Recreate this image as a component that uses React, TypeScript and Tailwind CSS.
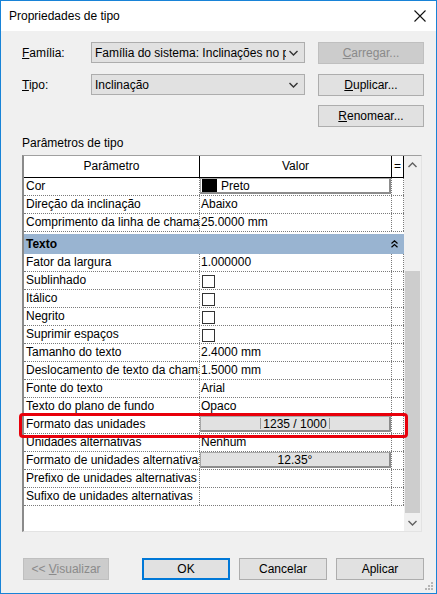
import React from 'react';

const font = "font-['Segoe_UI','Liberation_Sans',Arial,sans-serif]";

function Chevron({ up = false, className = '' }: { up?: boolean; className?: string }) {
  return (
    <svg width="9" height="6" viewBox="0 0 9 6" className={className}>
      <path d={up ? 'M0.5 5 L4.5 1 L8.5 5' : 'M0.5 1 L4.5 5 L8.5 1'} fill="none" stroke="currentColor" strokeWidth="1.4" />
    </svg>
  );
}

function CheckBox() {
  return <div className="ml-[2px] mt-[3px] h-[13px] w-[13px] border border-[#333333] bg-white" />;
}

function ValueButton({ children, split = false }: { children: React.ReactNode; split?: boolean }) {
  return (
    <div className="flex h-[16px] w-full items-center justify-center border border-[#a8a8a8] border-r-2 border-b-2 border-r-[#8c8c8c] border-b-[#8c8c8c] bg-[#e1e1e1] leading-[14px]">
      {split ? (
        <div className="flex items-center">
          <span className="h-[11px] w-px bg-[#9a9a9a]" />
          <span className="px-[2px]">{children}</span>
          <span className="h-[11px] w-px bg-[#9a9a9a]" />
        </div>
      ) : (
        children
      )}
    </div>
  );
}

function ColorButton() {
  return (
    <div className="flex h-[16px] w-full items-center border border-[#a8a8a8] border-r-2 border-b-2 border-r-[#8c8c8c] border-b-[#8c8c8c] bg-white">
      <span className="ml-[1px] h-[13px] w-[15px] bg-black" />
      <span className="ml-[4px] leading-[14px]">Preto</span>
    </div>
  );
}

function Row({ name, children }: { name: string; children?: React.ReactNode }) {
  return (
    <div className="flex h-[18px] border-b border-dotted border-[#7a7a7a]">
      <div className="w-[176px] shrink-0 overflow-hidden whitespace-nowrap border-r border-dotted border-[#7a7a7a] pl-[2px] leading-[17px]">
        {name}
      </div>
      <div className="w-[192px] shrink-0 overflow-hidden whitespace-nowrap border-r border-dotted border-[#7a7a7a] leading-[17px]">
        {children}
      </div>
      <div className="w-[12px] shrink-0 border-r border-dotted border-[#7a7a7a]" />
    </div>
  );
}

function TextValue({ children }: { children: React.ReactNode }) {
  return <span className="pl-[1px]">{children}</span>;
}

function DialogButton({ children, disabled = false, primary = false }: { children: React.ReactNode; disabled?: boolean; primary?: boolean }) {
  return (
    <div
      className={`flex h-[22px] w-[88px] items-center justify-center ${
        disabled
          ? 'border border-[#bfbfbf] bg-[#cccccc] text-[#8a8a8a]'
          : primary
          ? 'border-2 border-[#0078d7] bg-[#e1e1e1]'
          : 'border border-[#adadad] bg-[#e1e1e1]'
      }`}
    >
      {children}
    </div>
  );
}

export default function App() {
  return (
    <div className={`relative flex h-[594px] w-[437px] flex-col border border-[#1883d7] bg-[#f0f0f0] text-[12px] text-black ${font}`}>
      {/* Title bar */}
      <div className="flex h-[30px] shrink-0 items-center justify-between bg-white pl-[8px] pr-[10px]">
        <span className="leading-[16px]">Propriedades de tipo</span>
        <svg width="12" height="12" viewBox="0 0 12 12">
          <path d="M0.5 0.5 L11.5 11.5 M11.5 0.5 L0.5 11.5" stroke="#111" strokeWidth="1.1" />
        </svg>
      </div>

      <div className="flex flex-1 flex-col pl-[21px] pr-[12px]">
        {/* Família */}
        <div className="mt-[11px] flex h-[22px] items-center">
          <span className="w-[69px]">
            <u>F</u>amília:
          </span>
          <div className="flex h-[21px] w-[214px] items-center self-start border border-[#adadad] bg-[#e1e1e1] pl-[3px]">
            <span className="w-[191px] overflow-hidden whitespace-nowrap">Família do sistema: Inclinações no ponto</span>
            <Chevron className="ml-[3px] text-[#333]" />
          </div>
          <div className="ml-auto flex h-[22px] w-[106px] items-center justify-center border border-[#bfbfbf] bg-[#cccccc] text-[#8a8a8a]">
            <span>
              <u>C</u>arregar...
            </span>
          </div>
        </div>

        {/* Tipo */}
        <div className="mt-[10px] flex h-[22px] items-center">
          <span className="w-[69px]">
            <u>T</u>ipo:
          </span>
          <div className="flex h-[21px] w-[214px] items-center self-start border border-[#adadad] bg-[#e1e1e1] pl-[3px]">
            <span className="w-[191px] overflow-hidden whitespace-nowrap">Inclinação</span>
            <Chevron className="ml-[3px] text-[#333]" />
          </div>
          <div className="ml-auto flex h-[22px] w-[106px] items-center justify-center border border-[#adadad] bg-[#e1e1e1]">
            <span>
              <u>D</u>uplicar...
            </span>
          </div>
        </div>

        {/* Renomear */}
        <div className="mt-[9px] flex h-[22px] justify-end">
          <div className="flex h-[22px] w-[106px] items-center justify-center border border-[#adadad] bg-[#e1e1e1]">
            <span>
              <u>R</u>enomear...
            </span>
          </div>
        </div>

        <div className="mt-[8px] leading-[16px]">Parâmetros de tipo</div>

        {/* Property grid */}
        <div className="mt-[4px] flex h-[377px] w-[400px] border-t border-l-2 border-r border-b border-t-[#a0a0a0] border-l-[#8a8a8a] border-r-[#e3e3e3] border-b-[#e3e3e3] bg-white">
          <div className="flex w-[380px] flex-col">
            <div className="flex h-[22px] shrink-0 border-b border-black">
              <div className="w-[176px] border-r border-black text-center leading-[21px]">Parâmetro</div>
              <div className="w-[192px] border-r border-black text-center leading-[21px]">Valor</div>
              <div className="w-[12px] border-r border-black text-center leading-[20px]">=</div>
            </div>

            <Row name="Cor">
              <ColorButton />
            </Row>
            <Row name="Direção da inclinação">
              <TextValue>Abaixo</TextValue>
            </Row>
            <Row name="Comprimento da linha de chamada">
              <TextValue>25.0000 mm</TextValue>
            </Row>

            <div className="mt-[2px] flex h-[20px] shrink-0 items-center justify-between bg-[#99b4d1] pl-[2px] pr-[6px]">
              <span className="font-bold">Texto</span>
              <svg width="7" height="8" viewBox="0 0 7 8">
                <path d="M0.5 3.5 L3.5 0.8 L6.5 3.5 M0.5 7.2 L3.5 4.5 L6.5 7.2" fill="none" stroke="#000" strokeWidth="1.2" />
              </svg>
            </div>

            <Row name="Fator da largura">
              <TextValue>1.000000</TextValue>
            </Row>
            <Row name="Sublinhado">
              <CheckBox />
            </Row>
            <Row name="Itálico">
              <CheckBox />
            </Row>
            <Row name="Negrito">
              <CheckBox />
            </Row>
            <Row name="Suprimir espaços">
              <CheckBox />
            </Row>
            <Row name="Tamanho do texto">
              <TextValue>2.4000 mm</TextValue>
            </Row>
            <Row name="Deslocamento de texto da chamada">
              <TextValue>1.5000 mm</TextValue>
            </Row>
            <Row name="Fonte do texto">
              <TextValue>Arial</TextValue>
            </Row>
            <Row name="Texto do plano de fundo">
              <TextValue>Opaco</TextValue>
            </Row>
            <Row name="Formato das unidades">
              <ValueButton split>1235 / 1000</ValueButton>
            </Row>
            <Row name="Unidades alternativas">
              <TextValue>Nenhum</TextValue>
            </Row>
            <Row name="Formato de unidades alternativas">
              <ValueButton>12.35°</ValueButton>
            </Row>
            <Row name="Prefixo de unidades alternativas" />
            <Row name="Sufixo de unidades alternativas" />
          </div>

          {/* Scrollbar */}
          <div className="flex w-[17px] flex-col bg-[#f0f0f0]">
            <div className="flex h-[17px] items-center justify-center text-[#606060]">
              <Chevron up />
            </div>
            <div className="flex-1">
              <div className="mx-auto mt-[98px] h-[242px] w-[15px] bg-[#cdcdcd]" />
            </div>
            <div className="flex h-[17px] items-center justify-center text-[#606060]">
              <Chevron />
            </div>
          </div>
        </div>

        {/* Bottom buttons */}
        <div className="mt-[26px] flex items-center pl-[1px]">
          <DialogButton disabled>
            <span>
              &lt;&lt; <u>V</u>isualizar
            </span>
          </DialogButton>
          <div className="ml-[33px] flex gap-[9px]">
            <DialogButton primary>OK</DialogButton>
            <DialogButton>Cancelar</DialogButton>
            <DialogButton>Aplicar</DialogButton>
          </div>
        </div>
      </div>

      {/* Highlight */}
      <div className="pointer-events-none absolute left-[18px] top-[412px] h-[25px] w-[389px] rounded-[4px] border-[3px] border-[#e8000b]" />

      {/* Resize grip */}
      <svg className="absolute bottom-[2px] right-[2px]" width="10" height="10" viewBox="0 0 10 10">
        <g fill="#b5b5b5">
          <rect x="7" y="1" width="2" height="2" />
          <rect x="4" y="4" width="2" height="2" />
          <rect x="7" y="4" width="2" height="2" />
          <rect x="1" y="7" width="2" height="2" />
          <rect x="4" y="7" width="2" height="2" />
          <rect x="7" y="7" width="2" height="2" />
        </g>
      </svg>
    </div>
  );
}
